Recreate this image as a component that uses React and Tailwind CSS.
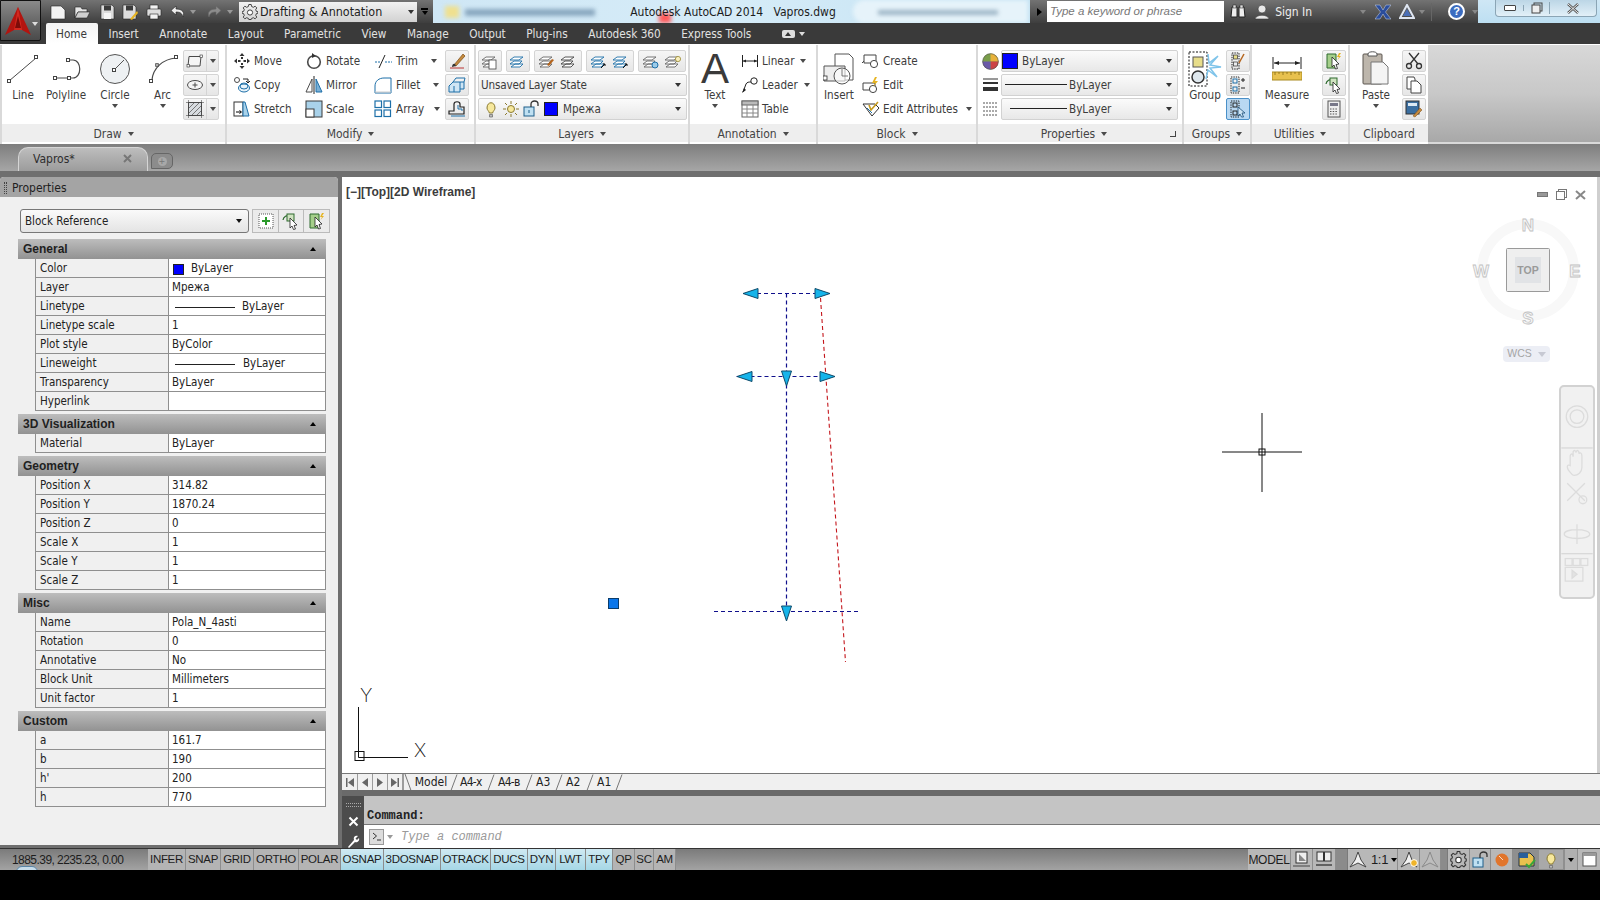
import React from "react";

const I = ({ w = 18, h = 18, children, className = "" }) => (
  <svg width={w} height={h} viewBox={`0 0 ${w} ${h}`} fill="none" className={"shrink-0 " + className}>{children}</svg>
);
const D = "#4a4a4a";
const T = ({ children, className = "" }) => <span className={"pt-[2px] " + className}>{children}</span>;
const Caret = ({ className = "border-t-[#4a4a4a]" }) => (
  <span className={"inline-block w-0 h-0 shrink-0 border-x-[3px] border-t-[4px] border-x-transparent " + className} />
);
const Sq = ({ x, y, s = 4 }) => <rect x={x - s / 2} y={y - s / 2} width={s} height={s} fill="#fff" stroke="#444" />;

/* ---------- ribbon icons ---------- */
const LineI = () => <I w={34} h={32}><path d="M3 28L30 5" stroke={D} /><Sq x={3} y={28} s={3} /><Sq x={30} y={4} s={3} /></I>;
const PolyI = () => <I w={34} h={32}><path d="M6 25H24C33 25 33 7 24 7H19" stroke={D} strokeWidth="1.2" /><Sq x={6} y={25} s={3} /><Sq x={20} y={25} s={3} /><Sq x={19} y={7} s={3} /></I>;
const CircleI = () => <I w={34} h={32}><circle cx={17} cy={16} r={14.5} fill="#eef1f3" stroke="#555" /><path d="M17 16L26 7" stroke="#555" /><Sq x={16} y={17} s={3} /></I>;
const ArcI = () => <I w={34} h={32}><path d="M6 27C7 15 17 6 30 5" stroke={D} strokeWidth="1.2" /><Sq x={5} y={28} s={3} /><Sq x={11} y={12} s={2.5} /><Sq x={30} y={4} s={3} /></I>;
const RectI = () => <I w={18} h={14}><path d="M3 2.5H15L14 12H2Z" stroke={D} fill="#f5f5f5" /><rect x={1} y={10.5} width={2.5} height={2.5} fill="#fff" stroke={D} strokeWidth=".7" /><rect x={14} y={1} width={2.5} height={2.5} fill="#fff" stroke={D} strokeWidth=".7" /></I>;
const EllI = () => <I w={18} h={14}><ellipse cx={9} cy={7} rx={7.5} ry={4.5} stroke={D} fill="#f5f5f5" /><path d="M9 4.5V9.5M6.5 7H11.5" stroke={D} /></I>;
const HatchI = () => <I w={18} h={18}><rect x={2.5} y={2.5} width={13} height={13} fill="#d8dce0" stroke={D} /><path d="M3 8L8 3M3 13L13 3M6 15L15 6M11 15L15 11" stroke="#777" /><path d="M0 2.5H18M0 15.5H18M2.5 0V18M15.5 0V18" stroke={D} strokeWidth=".6" /></I>;
const MoveI = () => <I><path d="M9 1L11.5 4H6.5ZM9 17L6.5 14H11.5ZM1 9L4 6.5V11.5ZM17 9L14 11.5V6.5Z" fill="#333" /><rect x={5} y={8} width={2.5} height={2} fill="#333" /><rect x={10.5} y={8} width={2.5} height={2} fill="#333" /><rect x={8} y={5} width={2} height={2} fill="#333" /><rect x={8} y={11} width={2} height={2} fill="#333" /></I>;
const CopyI = () => <I><circle cx={4} cy={4} r={2.5} stroke={D} fill="#fff" /><ellipse cx={11} cy={12} rx={5.5} ry={4} stroke="#1d6fa8" fill="#e8f3fa" /><ellipse cx={11} cy={10} rx={4} ry={3} stroke="#1d6fa8" /><path d="M10 3H15V6M13 5L15 7L17 5" stroke="#222" /></I>;
const StretchI = () => <I><rect x={1} y={2} width={9} height={14} fill="#fff" stroke="#333" /><path d="M10 2L12 2L16 16H10Z" fill="#a9d2ea" stroke="#1d6fa8" /><path d="M3 12H8M6.5 10.5L8.5 12L6.5 13.5" stroke="#000" /></I>;
const RotateI = () => <I><circle cx={9} cy={10} r={6.3} stroke={D} strokeWidth="1.6" /><path d="M7 1L11 4L7 6Z" fill="#333" /></I>;
const MirrorI = () => <I><path d="M7 3L1 16H7Z" stroke={D} fill="#fff" /><path d="M11 3L17 16H11Z" fill="#7ab0d6" stroke="#1d6fa8" /><path d="M9 0V18" stroke="#222" /></I>;
const ScaleI = () => <I><rect x={1} y={1} width={16} height={16} fill="#a9d2ea" stroke="#3b3b3b" /><rect x={1} y={9} width={8} height={8} fill="#fff" stroke="#3b3b3b" /></I>;
const TrimI = () => <I><path d="M1 10H6M11 10H18" stroke="#1d6fa8" strokeDasharray="2 1" /><path d="M5 16L11 3" stroke="#222" /></I>;
const FilletI = () => <I><path d="M1 16V10C1 5 5 2 10 2H17V17H1Z" fill="#fff" stroke="#1d6fa8" strokeWidth="1" /><path d="M1 16H17" stroke="#ccc" /></I>;
const ArrayI = () => <I>{[1, 10].map((x) => [1, 10].map((y) => <rect key={x + "" + y} x={x} y={y} width={6.5} height={6.5} fill="#fff" stroke="#1d6fa8" strokeWidth="1.2" />))}</I>;
const BrushI = () => <I w={18} h={18}><path d="M2 16H16" stroke="#b33" /><path d="M6 13L15 2L17 4L8 14Z" fill="#c48a3f" stroke="#7a4a12" strokeWidth=".7" /><path d="M4 15C4 12 6 11 7 12L8 14Z" fill="#333" /></I>;
const BoxI = () => <I><path d="M1 10L5 6H16V13H12V16H1Z" fill="#cfe5f4" stroke="#1d6fa8" /><path d="M5 6L8 2H17L16 6M12 13V6M6 10V16" stroke="#1d6fa8" /></I>;
const OffsetI = () => <I><path d="M1 14V11H6V4C6 1 12 1 12 4V7H16V14Z" stroke="#222" strokeWidth="1.2" /><path d="M3 16H17M14 11V9H10V5" stroke="#1d6fa8" /></I>;
const LayerI = ({ c = "#666", a }) => (
  <I><path d="M1 12L5 9H13L10 12H1ZM2 15L6 12H14L11 15H2Z" fill="#fff" stroke={c} strokeWidth=".9" /><path d="M1 8L5 5H14L10 8H1Z" fill="#fff" stroke={c} strokeWidth=".9" />{a === "brush" && <path d="M9 13L14 7L16 8L11 14Z" fill="#b5651d" />}{a === "doc" && <rect x={8} y={8} width={7} height={9} fill="#fff" stroke="#444" strokeWidth=".8" />}{a === "arrow" && <path d="M11 16L15 12M13 12H15V14" stroke="#111" />}{a === "gear" && <circle cx={13} cy={13} r={3} fill="#9ccbe8" stroke="#1d6fa8" />}{a === "bulb" && <circle cx={14} cy={7} r={2.6} fill="#f8efc0" stroke="#9a8a30" strokeWidth=".8" />}</I>
);
const BulbI = () => <I w={14} h={18}><path d="M3 8C3 1 11 1 11 8C11 10 9 11 8.6 13H5.4C5 11 3 10 3 8Z" fill="#f7e89c" stroke="#8a7a30" /><path d="M5.5 14.5H8.5V17H5.5Z" fill="#bbb" stroke="#666" strokeWidth=".7" /></I>;
const SunI = () => <I w={16} h={16}><circle cx={8} cy={8} r={3.5} fill="#f7e89c" stroke="#8a7a30" /><path d="M8 0V3M8 13V16M0 8H3M13 8H16M2 2L4 4M12 12L14 14M14 2L12 4M4 12L2 14" stroke="#8a7a30" /></I>;
const LockI = () => <I w={17} h={17}><rect x={1} y={7} width={10} height={9} fill="#bfe0f2" stroke="#1f5f8a" /><path d="M8 7V4C8 0 15 0 15 4V6" stroke="#333" strokeWidth="1.3" /><path d="M6 10V13" stroke="#1f5f8a" /></I>;
const Swatch = ({ s = 14 }) => <span className="inline-block bg-[#0000ff] border border-[#222] shrink-0" style={{ width: s, height: s }} />;
const LinearI = () => <I><path d="M1.5 3V15M16.5 3V15M2 9H16" stroke="#222" /><path d="M2 9L5 7.5V10.5ZM16 9L13 7.5V10.5Z" fill="#222" /></I>;
const LeaderI = () => <I><path d="M2 16L5 8C6 6 8 6 10 6" stroke="#222" /><path d="M1 17L3 12L5 14Z" fill="#222" /><circle cx={13} cy={5} r={3.2} stroke="#222" /></I>;
const TableI = () => <I><rect x={1} y={1} width={16} height={16} fill="#fff" stroke="#666" /><rect x={1} y={1} width={16} height={4} fill="#bbb" stroke="#666" /><path d="M1 9H17M1 13H17M6 5V17M12 5V17" stroke="#888" /></I>;
const InsertI = () => <I w={32} h={34}><path d="M12 2H26L30 6V28H12Z" fill="#fff" stroke="#555" /><path d="M1 14H22V29H1Z" fill="#eee" stroke="#555" /><circle cx={19} cy={24} r={8} fill="#fff" fillOpacity=".6" stroke="#555" /><path d="M19 17V24H25" stroke="#555" strokeWidth=".8" /><rect x={0} y={24} width={4} height={4} fill="#fff" stroke="#333" strokeWidth=".8" /></I>;
const CreateI = () => <I><path d="M2 3H14V11H2Z" stroke="#444" fill="#fff" /><circle cx={12} cy={12} r={3.6} fill="#fff" stroke="#444" /><path d="M2 9L0 11" stroke="#444" /></I>;
const EditI = () => <I><path d="M1 7H13V14H1Z" stroke="#444" fill="#fff" /><circle cx={11} cy={13} r={3.6} fill="#fff" stroke="#444" /><path d="M13 1L10 7H13L11 11L16 5H13L15 1Z" fill="#e6b422" /></I>;
const AttrI = () => <I w={20} h={18}><path d="M1 4H13L17 8L10 16Z" fill="#fff" stroke="#333" /><path d="M7 5L9 10L16 2" stroke="#c59a1d" strokeWidth="1.6" /><path d="M5 8L10 13" stroke="#1d6fa8" /></I>;
const WheelI = () => (
  <I w={17} h={17}><circle cx={8.5} cy={8.5} r={8} fill="#7a9e4a" /><path d="M8.5 8.5L8.5 .5A8 8 0 0 1 16.5 8.5Z" fill="#e8b23a" /><path d="M8.5 8.5L16.5 8.5A8 8 0 0 1 8.5 16.5Z" fill="#cc4444" /><path d="M8.5 8.5L8.5 16.5A8 8 0 0 1 .5 8.5Z" fill="#6a5aa8" /><circle cx={8.5} cy={8.5} r={7.8} stroke="#555" strokeWidth=".6" /></I>
);
const WeightI = () => <I w={17} h={16}><path d="M1 2H16" stroke="#333" strokeWidth="1" /><path d="M1 6H16" stroke="#333" strokeWidth="2" /><path d="M1 12H16" stroke="#333" strokeWidth="4" /></I>;
const LtypeI = () => <I w={17} h={16}><path d="M1 2H16M1 6H16M1 10H16M1 14H16" stroke="#555" strokeDasharray="2 1" /></I>;
const GroupI = () => (
  <I w={34} h={36}><rect x={1} y={1} width={18} height={34} stroke="#111" strokeDasharray="2 1.5" /><rect x={5} y={6} width={10} height={10} fill="#e7dd8a" stroke="#555" /><circle cx={10} cy={26} r={6} fill="#dfe8ee" stroke="#333" strokeWidth="1.5" /><path d="M20 3L21 12L30 5L22 14L33 16L22 17L29 26L20 19L18 28" stroke="#7fc4ea" strokeWidth="1.5" /></I>
);
const G1 = () => <I w={14} h={18}><rect x={1} y={1} width={7} height={16} stroke="#222" strokeDasharray="1.4 1" /><rect x={2.5} y={3} width={4} height={4} fill="#e7dd8a" stroke="#333" strokeWidth=".7" /><rect x={2.5} y={10} width={4} height={4} stroke="#333" strokeWidth=".7" /><path d="M8 11L13 2" stroke="#b5651d" strokeWidth="1.5" /></I>;
const G2 = () => <I w={16} h={18}><rect x={1} y={1} width={8} height={16} stroke="#222" strokeDasharray="1.4 1" /><rect x={3} y={3} width={4} height={4} stroke="#1d6fa8" /><rect x={3} y={11} width={4} height={4} stroke="#1d6fa8" /><path d="M11 4H15M13 2V6M11 12H15" stroke="#222" /></I>;
const G3 = () => <I w={16} h={18}><rect x={1} y={1} width={8} height={16} stroke="#222" strokeDasharray="1.4 1" /><rect x={3} y={3} width={4} height={4} stroke="#222" /><rect x={3} y={11} width={4} height={4} stroke="#222" /><path d="M8 7L15 13L12 13L13.5 17L11.5 17L10 14L8 16Z" fill="#cfe5f4" stroke="#1d4f78" strokeWidth=".8" /></I>;
const MeasureI = () => <I w={30} h={26}><path d="M1 1V13M29 1V13M2 7H28" stroke="#222" /><path d="M2 7L7 5V9ZM28 7L23 5V9Z" fill="#222" /><rect x={0} y={16} width={30} height={8} fill="#e8c14e" stroke="#a98a20" /><path d="M3 16V19M7 16V18M11 16V19M15 16V18M19 16V19M23 16V18M27 16V19" stroke="#7a6310" strokeWidth=".7" /></I>;
const QuickI = () => <I><path d="M2 2H11V16H2Z" fill="#a5cf8a" stroke="#2e6b2e" /><path d="M7 5L14 12L11 12.5L12.5 16.5L10.5 17L9 13L7 15Z" fill="#fff" stroke="#222" strokeWidth=".8" /><path d="M14 1L12 5H14L12.5 8L16 4H14L16 1Z" fill="#e6b422" /></I>;
const SelSimI = () => <I><path d="M1 8A5 5 0 0 1 8 4" stroke="#2e6b2e" strokeWidth="1.2" /><rect x={5} y={2} width={7} height={7} fill="#cfe3c0" stroke="#2e6b2e" /><path d="M8 6L15 13L12 13.5L13.5 17L11.5 17.5L10 14L8 16Z" fill="#fff" stroke="#222" strokeWidth=".8" /></I>;
const CalcI = () => <I w={14} h={18}><rect x={1} y={1} width={12} height={16} fill="#eee" stroke="#555" /><rect x={3} y={3} width={8} height={3} fill="#778" /><path d="M3 9H11M3 11.5H11M3 14H11" stroke="#555" strokeDasharray="1.5 1.2" /></I>;
const PasteI = () => <I w={28} h={36}><rect x={1} y={3} width={19} height={30} rx={1} fill="#bdb6ac" stroke="#5c5650" /><path d="M6 3C6 0 15 0 15 3V5H6Z" fill="#fff" stroke="#555" /><path d="M9 11H21L26 16V33H9Z" fill="#f4f4f4" stroke="#777" /></I>;
const CutI = () => <I><path d="M4 1L13 12M14 1L5 12" stroke="#333" strokeWidth="1.3" /><circle cx={4} cy={14} r={2.5} stroke="#333" strokeWidth="1.3" /><circle cx={14} cy={14} r={2.5} stroke="#333" strokeWidth="1.3" /></I>;
const CopyClipI = () => <I><path d="M2 1H9L10 3V13H2Z" fill="#fff" stroke="#444" /><path d="M6 5H12L16 9V17H6Z" fill="#fff" stroke="#444" /></I>;
const MatchI = () => <I><rect x={1} y={1} width={13} height={13} fill="#3a6ea0" stroke="#333" /><rect x={3} y={3} width={9} height={3} fill="#dce9f3" /><path d="M8 16L15 8L17 10L10 17Z" fill="#c48a3f" stroke="#7a4a12" strokeWidth=".5" /></I>;

/* ---------- ribbon pieces ---------- */
const Row = ({ icon, label, caret, slot = "w-[21px]", capX = "" }) => (
  <div className="h-[24px] flex items-center whitespace-nowrap">
    <span className={"flex items-center " + slot}>{icon}</span>
    <T>{label}</T>
    {caret && <span className={"flex items-center " + capX}><Caret /></span>}
  </div>
);
const Tool = ({ children, active, className = "" }) => (
  <div className={"h-[22px] flex items-center justify-center border rounded-[2px] " + (active ? "bg-[#b9d8f2] border-[#4a90c8] " : "bg-gradient-to-b from-[#f6f6f6] to-[#e6e6e6] border-[#d4d4d4] ") + className}>{children}</div>
);
const ToolCol = ({ items, className = "" }) => (
  <div className={"w-[24px] flex flex-col gap-[2px] pt-[5px] " + className}>
    {items.map((it, i) => <Tool key={i} active={it.active}>{it.icon}</Tool>)}
  </div>
);
const Big = ({ icon, label, caret, className = "", top = "h-[37px]" }) => (
  <div className={"flex flex-col items-center pt-[5px] " + className}>
    <div className={"flex items-center justify-center " + top}>{icon}</div>
    <span className="leading-[16px]">{label}</span>
    {caret && <span className="flex mt-[1px]"><Caret /></span>}
  </div>
);
const Combo = ({ children, className = "" }) => (
  <div className={"h-[22px] flex items-center pr-[5px] border border-[#d2d2d2] rounded-[2px] bg-gradient-to-b from-[#fbfbfb] to-[#e8e8e8] " + className}>
    <div className="flex-1 flex items-center min-w-0">{children}</div>
    <Caret className="border-t-[#333]" />
  </div>
);
const Panel = ({ w, title, caret = true, corner, children }) => (
  <div className={"flex flex-col " + w}>
    <div className="h-[79px] flex bg-white text-[11.6px]">{children}</div>
    <div className={"relative h-[18px] pt-[1px] bg-[#eeeeee] flex items-center justify-center gap-[6px] text-[#444] " + (corner ? "pr-[12px]" : "")}>
      <span>{title}</span>
      {caret && <Caret />}
      {corner && <span className="absolute right-[6px] top-[7px] w-[6px] h-[6px] border-r border-b border-[#444]" />}
    </div>
    <div className="h-[2px] bg-white" />
  </div>
);
const Ribbon = () => (
  <div className="h-[100px] flex gap-[2px] pl-[2px] bg-[#d9d9d9] text-[12px] text-[#3c3c3c] border-t border-white">
    <Panel w="w-[223px]" title="Draw">
      <Big className="w-[42px]" icon={<LineI />} label="Line" />
      <Big className="w-[44px]" icon={<PolyI />} label="Polyline" />
      <Big className="w-[54px]" icon={<CircleI />} label="Circle" caret />
      <Big className="w-[41px]" icon={<ArcI />} label="Arc" caret />
      <div className="w-[36px] flex flex-col gap-[2px] pt-[5px]">
        {[<RectI />, <EllI />, <HatchI />].map((ic, i) => (
          <div key={i} className="h-[22px] flex border border-[#d4d4d4] rounded-[2px] bg-gradient-to-b from-[#f6f6f6] to-[#e6e6e6]">
            <span className="w-[23px] flex items-center justify-center border-r border-[#d4d4d4]">{ic}</span>
            <span className="flex-1 flex items-center justify-center"><Caret /></span>
          </div>
        ))}
      </div>
    </Panel>
    <Panel w="w-[247px]" title="Modify">
      <div className="w-[78px] pl-[6px] pt-[4px]">
        <Row icon={<MoveI />} label="Move" /><Row icon={<CopyI />} label="Copy" /><Row icon={<StretchI />} label="Stretch" />
      </div>
      <div className="w-[69px] pt-[4px]">
        <Row icon={<RotateI />} label="Rotate" /><Row icon={<MirrorI />} label="Mirror" /><Row icon={<ScaleI />} label="Scale" />
      </div>
      <div className="w-[71px] pt-[4px]">
        <Row slot="w-[22px]" icon={<TrimI />} label="Trim" caret capX="ml-[13px]" />
        <Row slot="w-[22px]" icon={<FilletI />} label="Fillet" caret capX="ml-[13px]" />
        <Row slot="w-[22px]" icon={<ArrayI />} label="Array" caret capX="ml-[10px]" />
      </div>
      <ToolCol items={[{ icon: <BrushI /> }, { icon: <BoxI /> }, { icon: <OffsetI /> }]} />
    </Panel>
    <Panel w="w-[212px]" title="Layers">
      <div className="pl-[2px] pt-[5px] flex flex-col gap-[2px]">
        <div className="flex gap-[4px] h-[22px]">
          <Tool className="w-[24px]"><LayerI a="doc" /></Tool>
          <Tool className="w-[24px]"><LayerI c="#1d6fa8" /></Tool>
          <Tool className="w-[48px] gap-[4px]"><LayerI a="brush" /><LayerI c="#444" /></Tool>
          <Tool className="w-[48px] gap-[4px]"><LayerI c="#1d6fa8" a="arrow" /><LayerI c="#1d6fa8" a="arrow" /></Tool>
          <Tool className="w-[48px] gap-[4px]"><LayerI a="gear" /><LayerI a="bulb" /></Tool>
        </div>
        <Combo className="w-[209px] pl-[2px] tracking-[-0.15px]"><T>Unsaved Layer State</T></Combo>
        <Combo className="w-[209px] pl-[5px]">
          <BulbI /><span className="w-[5px]" /><SunI /><span className="w-[4px]" /><LockI /><span className="w-[4px]" /><Swatch /><T className="ml-[5px]">Мрежа</T>
        </Combo>
      </div>
    </Panel>
    <Panel w="w-[126px]" title="Annotation">
      <Big className="w-[50px]" top="h-[37px]" icon={<span className="text-[42px] leading-[34px] text-[#3a3a3a] font-['Liberation_Sans']">A</span>} label="Text" caret />
      <div className="pt-[4px] pl-[1px]">
        <Row icon={<LinearI />} label="Linear" caret capX="ml-[6px]" />
        <Row icon={<LeaderI />} label="Leader" caret capX="ml-[6px]" />
        <Row icon={<TableI />} label="Table" />
      </div>
    </Panel>
    <Panel w="w-[158px]" title="Block">
      <Big className="w-[42px]" icon={<InsertI />} label="Insert" />
      <div className="pt-[4px] pl-[2px]">
        <Row icon={<CreateI />} label="Create" />
        <Row icon={<EditI />} label="Edit" />
        <Row icon={<AttrI />} label="Edit Attributes" caret capX="ml-[8px]" />
      </div>
    </Panel>
    <Panel w="w-[204px]" title="Properties" corner>
      <div className="flex flex-col pt-[5px] gap-[2px] pl-[4px]">
        <div className="flex items-center h-[22px]"><span className="w-[19px]"><WheelI /></span>
          <Combo className="w-[177px]"><Swatch s={16} /><T className="ml-[4px]">ByLayer</T></Combo></div>
        <div className="flex items-center h-[22px]"><span className="w-[19px]"><WeightI /></span>
          <Combo className="w-[177px] pl-[3px]"><span className="w-[62px] h-px bg-[#222] mr-[2px]" /><T>ByLayer</T></Combo></div>
        <div className="flex items-center h-[22px]"><span className="w-[19px]"><LtypeI /></span>
          <Combo className="w-[177px] pl-[8px]"><span className="w-[57px] h-px bg-[#222] mr-[2px]" /><T>ByLayer</T></Combo></div>
      </div>
    </Panel>
    <Panel w="w-[66px]" title="Groups">
      <Big className="w-[42px]" icon={<GroupI />} label="Group" />
      <ToolCol items={[{ icon: <G1 /> }, { icon: <G2 /> }, { icon: <G3 />, active: true }]} />
    </Panel>
    <Panel w="w-[96px]" title="Utilities">
      <Big className="w-[70px]" icon={<MeasureI />} label="Measure" caret />
      <ToolCol items={[{ icon: <QuickI /> }, { icon: <SelSimI /> }, { icon: <CalcI /> }]} />
    </Panel>
    <Panel w="w-[78px]" title="Clipboard" caret={false}>
      <Big className="w-[52px]" icon={<PasteI />} label="Paste" caret />
      <ToolCol items={[{ icon: <CutI /> }, { icon: <CopyClipI /> }, { icon: <MatchI /> }]} />
    </Panel>
    <div className="flex-1 ml-[-2px] mb-[2px] bg-gradient-to-b from-[#d8d8d8] via-[#c8c8c8] to-[#a8a8a8]" />
  </div>
);

/* ---------- title bar ---------- */
const AppLogo = () => (
  <div className="absolute left-0 top-0 w-[41px] h-[41px] border border-[#111] rounded-br-[2px] bg-gradient-to-b from-[#8a8a8a] to-[#4a4a4a] flex items-center pl-[4px]">
    <svg width="26" height="30" viewBox="0 0 26 30">
      <path d="M13 1L26 29L17 24H9L0 29Z" fill="#b3140f" />
      <path d="M13 1L17 24H9Z" fill="#d4281f" />
      <path d="M10 22L13 10L16 22Z" fill="#7d0c09" />
    </svg>
    <span className="ml-[1px]"><Caret className="border-t-[#ddd]" /></span>
  </div>
);
const DocI = () => <I w={16} h={16}><path d="M1 2H11L15 6V15H1Z" fill="#f2f2f2" stroke="#222" strokeWidth=".6" /></I>;
const OpenI = () => <I w={16} h={16}><path d="M1 3H7L8 5H13V8H4L1 14Z" fill="#e6e6e6" stroke="#222" strokeWidth=".6" /><path d="M4 8H16L13 14H1Z" fill="#cfcfcf" stroke="#222" strokeWidth=".6" /></I>;
const SaveI = () => <I w={16} h={16}><path d="M2 1H13L15 3V15H2Z" fill="#dcdcdc" stroke="#222" strokeWidth=".6" /><rect x={5} y={1.5} width={7} height={5} fill="#3b3b3b" /><rect x={5} y={9} width={7} height={6} fill="#f5f5f5" /></I>;
const SaveAsI = () => <I w={16} h={16}><path d="M1 1H12L14 3V15H1Z" fill="#dcdcdc" stroke="#222" strokeWidth=".6" /><rect x={4} y={1.5} width={7} height={5} fill="#3b3b3b" /><path d="M8 15L15 7L16 9L10 16Z" fill="#e6b422" /></I>;
const PrintI = () => <I w={16} h={16}><rect x={4} y={1} width={8} height={5} fill="#f2f2f2" stroke="#222" strokeWidth=".6" /><rect x={1} y={5} width={14} height={7} rx={1} fill="#dedede" stroke="#222" strokeWidth=".6" /><rect x={4} y={10} width={8} height={5} fill="#f2f2f2" stroke="#222" strokeWidth=".6" /></I>;
const UndoI = ({ flip, dim }) => (
  <I w={16} h={14} className={flip ? "-scale-x-100" : ""}>
    <path d="M6 1L1 5.5L6 10V7C10 7 12 8 13 12C15 7 12 4 6 4Z" fill={dim ? "#8c8c8c" : "#eeeeee"} stroke={dim ? "#666" : "#222"} strokeWidth=".6" />
  </I>
);
const GearI = ({ s = 16, c = "#444", f = "none" }) => (
  <svg width={s} height={s} viewBox="0 0 16 16" fill={f} className="shrink-0">
    <path d="M6.8 1H9.2L9.6 3L11.4 3.8L13.1 2.7L14.8 4.4L13.7 6.1L14.4 7.9L16 8.3V9.7L14.4 10.1L13.7 11.9L14.8 13.6L13.1 15.3L11.4 14.2L9.6 14.9L9.2 16H6.8L6.4 14.9L4.6 14.2L2.9 15.3L1.2 13.6L2.3 11.9L1.6 10.1L0 9.7V8.3L1.6 7.9L2.3 6.1L1.2 4.4L2.9 2.7L4.6 3.8L6.4 3Z" stroke={c} strokeWidth="1" transform="translate(0 -.5)" />
    <circle cx="8" cy="8.5" r="2.6" stroke={c} strokeWidth="1" fill="#fff" />
  </svg>
);
const TitleBar = () => (
  <div className="relative h-[23px] flex text-[12px]">
    <div className="w-[433px] shrink-0 flex items-center pl-[50px] bg-gradient-to-b from-[#737373] to-[#3e3e3e]">
      <span className="w-[24px]"><DocI /></span>
      <span className="w-[25px]"><OpenI /></span>
      <span className="w-[23px]"><SaveI /></span>
      <span className="w-[24px]"><SaveAsI /></span>
      <span className="w-[24px]"><PrintI /></span>
      <span className="w-[20px]"><UndoI /></span>
      <span className="w-[16px] flex"><Caret className="border-t-[#999]" /></span>
      <span className="w-[21px]"><UndoI flip dim /></span>
      <span className="w-[12px] flex"><Caret className="border-t-[#999]" /></span>
      <div className="w-[178px] h-[20px] flex items-center pl-[3px] pr-[3px] bg-gradient-to-b from-[#f2f2f2] to-[#d2d2d2] text-[#222] text-[12.4px]">
        <GearI />
        <T className="ml-[2px] flex-1 whitespace-nowrap">Drafting &amp; Annotation</T>
        <Caret className="border-t-[#333]" />
      </div>
      <div className="ml-[4px] flex flex-col items-center gap-[1px]">
        <span className="w-[7px] h-[2px] bg-black" />
        <Caret className="border-t-black" />
      </div>
    </div>
    <div className="relative w-[597px] shrink-0 flex items-center justify-center bg-gradient-to-r from-[#cfe7f5] via-[#d6ecf8] to-[#c3e2f3] overflow-hidden text-[#1c1c1c] text-[12px]">
      <span className="absolute left-[12px] top-[6px] w-[14px] h-[12px] bg-[#efe08f] blur-[2px]" />
      <span className="absolute left-[32px] top-[9px] w-[130px] h-[7px] bg-[#6b8ca8] opacity-70 blur-[2px]" />
      <span className="absolute left-[226px] top-[13px] w-[12px] h-[10px] bg-[#ff5a5a] blur-[2px]" />
      <span className="absolute left-[420px] top-[0px] w-[175px] h-[23px] rounded-l-[12px] bg-[#e6f3fa] blur-[2px]" />
      <span className="absolute left-[445px] top-[10px] w-[120px] h-[5px] bg-[#7e9bb0] opacity-70 blur-[2px]" />
      <span className="relative ml-[3px] whitespace-pre">Autodesk AutoCAD 2014   Vapros.dwg</span>
    </div>
    <div className="relative w-[448px] shrink-0 flex items-center bg-gradient-to-b from-[#737373] to-[#3e3e3e] text-white whitespace-nowrap">
      <span className="ml-[7px] w-0 h-0 border-y-[4px] border-l-[5px] border-y-transparent border-l-black" />
      <div className="ml-[5px] w-[179px] h-[21px] flex items-center pl-[3px] bg-white italic text-[#777] text-[11.5px] font-['Liberation_Sans']">Type a keyword or phrase</div>
      <I w={16} h={16} className="ml-[6px]"><path d="M2 3H7V13H1Z M9 3H14L15 13H9Z" fill="#eee" stroke="#222" /><rect x={3} y={1} width={3} height={3} fill="#ddd" stroke="#222" strokeWidth=".5" /><rect x={10} y={1} width={3} height={3} fill="#ddd" stroke="#222" strokeWidth=".5" /></I>
      <I w={16} h={16} className="ml-[8px]"><circle cx={8} cy={5} r={4} fill="#e8e8e8" stroke="#333" strokeWidth=".6" /><path d="M1 15C2 10 14 10 15 15Z" fill="#e8e8e8" stroke="#333" strokeWidth=".6" /></I>
      <span className="ml-[5px] w-[36px] text-[#eee]">Sign In</span>
      <span className="ml-[49px] flex"><Caret className="border-t-[#888]" /></span>
      <I w={16} h={16} className="ml-[9px]"><path d="M0 1H5L8 6L11 1H16L10.5 8L16 15H11L8 10L5 15H0L5.5 8Z" fill="#2a4d9c" stroke="#cfd9ee" strokeWidth=".5" /></I>
      <I w={16} h={16} className="ml-[8px]"><path d="M8 1L15 14H1Z" stroke="#dfe6f2" strokeWidth="2" /><path d="M8 5L12 12H4Z" fill="#4a6fb8" /></I>
      <span className="ml-[4px] flex"><Caret className="border-t-[#888]" /></span>
      <span className="ml-[6px] w-px h-[18px] bg-[#666]" />
      <span className="relative ml-[16px] w-[17px] h-[17px] rounded-full bg-[#3b6cc0] border-2 border-white text-[11px] leading-[13px] text-center font-bold text-white font-['Liberation_Sans']">?</span>
      <span className="ml-[7px] flex"><Caret className="border-t-[#888]" /></span>
    </div>
    <div className="flex-1 bg-gradient-to-b from-[#cfe7f5] to-[#bddff2] flex justify-end pr-[3px]">
      <div className="w-[102px] h-[17px] flex items-center border border-t-0 border-[#8ba5b5] rounded-b-[4px] bg-gradient-to-b from-[#bcd6e6] to-[#e2f0f8]">
        <span className="w-[28px] flex justify-center border-r border-[#8ba5b5]"><span className="w-[12px] h-[6px] border border-[#444] rounded-[1px] bg-white" /></span>
        <span className="w-[26px] flex justify-center border-r border-[#8ba5b5]"><I w={12} h={12}><rect x={3} y={1} width={8} height={8} stroke="#444" /><rect x={1} y={3} width={8} height={8} fill="#eee" stroke="#444" /></I></span>
        <span className="flex-1 flex justify-center"><I w={12} h={11}><path d="M1 1L11 10M11 1L1 10" stroke="#555" strokeWidth="2.4" /><path d="M1 1L11 10M11 1L1 10" stroke="#eee" strokeWidth="1" /></I></span>
      </div>
    </div>
  </div>
);

const Tabs = () => (
  <div className="h-[21px] flex bg-[#3a3a3a] text-[11.7px] text-[#e2e2e2] pl-[46px]">
    {["Home", "Insert", "Annotate", "Layout", "Parametric", "View", "Manage", "Output", "Plug-ins", "Autodesk 360", "Express Tools"].map((t, i) => (
      <div key={t} className={"h-[21px] pl-[10px] pr-[10.5px] pt-[2px] flex items-center " + (i === 0 ? "bg-gradient-to-b from-[#f4f4f4] to-[#ffffff] text-[#3a3a3a] rounded-t-[2px] mr-[1px] " : "")}>{t}</div>
    ))}
    <div className="ml-[20px] flex items-center gap-[4px]">
      <span className="w-[13px] h-[8px] rounded-[2px] bg-[#dedede] flex items-center justify-center"><Caret className="border-t-[#333] rotate-180" /></span>
      <Caret className="border-t-[#ddd]" />
    </div>
  </div>
);

const DocBar = () => (
  <div className="h-[27px] flex items-end pl-[18px] bg-gradient-to-b from-[#7e7e7e] to-[#a6a6a6]">
    <div className="w-[130px] h-[24px] pb-[2px] pl-[14px] pr-[15px] flex items-center justify-between rounded-t-[10px] bg-gradient-to-b from-[#bdbdbd] to-[#9c9c9c] border-t border-x border-[#d5d5d5] text-[12px] text-[#2e2e2e]">
      <span>Vapros*</span>
      <I w={9} h={9}><path d="M1 1L8 8M8 1L1 8" stroke="#777" strokeWidth="2" /></I>
    </div>
    <div className="ml-[3px] w-[22px] h-[16px] mb-[2px] rounded-t-[5px] rounded-br-[5px] bg-[#8c8c8c] border border-[#666] flex items-center justify-center">
      <span className="w-[9px] h-[9px] rounded-full bg-[#a8a8a8] text-[9px] leading-[9px] text-center text-[#777]">+</span>
    </div>
  </div>
);

/* ---------- properties palette ---------- */
const Ln = ({ w }) => <span className={"h-px bg-[#222] " + w} />;
const sections = [
  { t: "General", rows: [
    ["Color", <span className="flex items-center gap-[7px] pl-[1px]"><Swatch s={11} />ByLayer</span>],
    ["Layer", "Мрежа"],
    ["Linetype", <span className="flex items-center gap-[7px] pl-[3px]"><Ln w="w-[60px]" />ByLayer</span>],
    ["Linetype scale", "1"],
    ["Plot style", "ByColor"],
    ["Lineweight", <span className="flex items-center gap-[8px] pl-[3px]"><Ln w="w-[60px]" />ByLayer</span>],
    ["Transparency", "ByLayer"],
    ["Hyperlink", ""],
  ] },
  { t: "3D Visualization", rows: [["Material", "ByLayer"]] },
  { t: "Geometry", rows: [["Position X", "314.82"], ["Position Y", "1870.24"], ["Position Z", "0"], ["Scale X", "1"], ["Scale Y", "1"], ["Scale Z", "1"]] },
  { t: "Misc", rows: [["Name", "Pola_N_4asti"], ["Rotation", "0"], ["Annotative", "No"], ["Block Unit", "Millimeters"], ["Unit factor", "1"]] },
  { t: "Custom", rows: [["a", "161.7"], ["b", "190"], ["h'", "200"], ["h", "770"]] },
];
const Palette = () => (
  <div className="w-[338px] h-[668px] rounded-t-[4px] bg-[#f0f0f0] flex flex-col text-[11.5px] text-[#222] overflow-hidden">
    <div className="h-[20px] pl-[4px] pt-[1px] flex items-center gap-[5px] bg-[#a4a4a4] text-[#1f1f1f] text-[12px]">
      <span className="w-[3px] h-[12px] border-x border-dotted border-[#444]" />
      <span>Properties</span>
    </div>
    <div className="flex pl-[20px] pt-[12px]">
      <div className="w-[229px] h-[24px] flex items-center pl-[4px] pr-[6px] border border-[#777] rounded-[3px] bg-gradient-to-b from-[#fafafa] to-[#e4e4e4]">
        <T className="flex-1">Block Reference</T>
        <Caret className="border-t-[#111]" />
      </div>
      <div className="ml-[3px] flex h-[24px] border border-[#bbb] bg-[#ebebeb]">
        <span className="w-[26px] flex items-center justify-center border-r border-[#bbb]"><I w={16} h={16}><rect x={1} y={1} width={14} height={14} stroke="#555" strokeDasharray="1 1" fill="#fff" /><path d="M8 4V12M4 8H12" stroke="#2b9a2b" strokeWidth="2" /></I></span>
        <span className="w-[25px] flex items-center justify-center border-r border-[#bbb]"><SelSimI /></span>
        <span className="w-[25px] flex items-center justify-center"><QuickI /></span>
      </div>
    </div>
    <div className="pl-[18px] pt-[6px] flex flex-col gap-[3px]">
      {sections.map((s) => (
        <div key={s.t} className="w-[308px]">
          <div className="h-[20px] flex items-center justify-between pl-[5px] pr-[10px] bg-gradient-to-b from-[#bdbdbd] to-[#929292] font-bold text-[#1f1f1f] text-[12px] font-['Liberation_Sans']">
            <span>{s.t}</span>
            <Caret className="border-t-black rotate-180" />
          </div>
          <div className="ml-[17px] border-l border-[#8f8f8f]">
            {s.rows.map(([k, v]) => (
              <div key={k} className="h-[19px] flex border-b border-r border-[#8f8f8f]">
                <div className="w-[133px] pl-[4px] pt-[2px] flex items-center border-r border-[#8f8f8f] bg-[#f0f0f0]">{k}</div>
                <div className="flex-1 pl-[3px] pt-[2px] flex items-center bg-white">{v}</div>
              </div>
            ))}
          </div>
        </div>
      ))}
    </div>
  </div>
);

/* ---------- model space ---------- */
const Grip = ({ x, y, dir }) => {
  const p = {
    l: `${x},${y} ${x + 15},${y - 5} ${x + 15},${y + 5}`,
    r: `${x},${y - 5} ${x + 15},${y} ${x},${y + 5}`,
    d: `${x - 5},${y} ${x + 5},${y} ${x},${y + 15}`,
  }[dir];
  return <polygon points={p} fill="#16b4ea" stroke="#0d4a6a" strokeWidth="1" />;
};
const Drawing = () => (
  <svg className="absolute inset-0" width="1257" height="596" viewBox="342 177 1257 596" fill="none">
    <g stroke="#10108c" strokeWidth="1.2" strokeDasharray="4 3">
      <path d="M743 293.5H830M736.5 376.5H835M786.5 293.5V611M714 611.5H860" />
    </g>
    <path d="M820.5 298L845.5 662" stroke="#c4161c" strokeWidth="1.1" strokeDasharray="4 3" />
    <Grip x={743} y={293.5} dir="l" /><Grip x={815} y={293.5} dir="r" />
    <Grip x={737} y={376.5} dir="l" /><Grip x={820} y={376.5} dir="r" />
    <Grip x={786.5} y={371} dir="d" /><Grip x={786.5} y={606} dir="d" />
    <rect x="608.5" y="598.5" width="10" height="10" fill="#0a76ea" stroke="#0b3c6a" />
    <g stroke="#111" strokeWidth="1">
      <path d="M1262 413V449M1262 455V492M1222 452H1259M1265 452H1302" />
      <rect x="1259" y="449" width="6" height="6" />
      <path d="M1259 452H1265M1262 449V455" />
      <path d="M358.5 707V757.5H408" />
      <rect x="355" y="751.5" width="9" height="9" />
    </g>
    <text x="360" y="702" fontSize="19" fontWeight="200" fill="#111" fontFamily="Inter, sans-serif">Y</text>
    <text x="414" y="757" fontSize="19" fontWeight="200" fill="#111" fontFamily="Inter, sans-serif">X</text>

    <circle cx="1528" cy="270" r="46" stroke="#f8f8f8" strokeWidth="10" />
    <rect x="1506.5" y="248.5" width="43" height="43" rx="1" fill="#efefef" stroke="#9a9a9a" />
    <rect x="1515" y="257" width="26" height="26" fill="#e1e3e6" />
    <g fontFamily="'Liberation Sans', sans-serif" fontWeight="700" fill="#f6f6f6" stroke="#c2c2c2" strokeWidth=".8" fontSize="17" textAnchor="middle">
      <text x="1528" y="231">N</text><text x="1528" y="324">S</text><text x="1481" y="277">W</text><text x="1575" y="277">E</text>
    </g>
    <text x="1528" y="274" fontSize="10.5" fontWeight="700" textAnchor="middle" fill="#9a9a9a" fontFamily="'Liberation Sans', sans-serif">TOP</text>
  </svg>
);
const NavBar = () => (
  <div className="absolute left-[1217px] top-[208px] w-[36px] h-[214px] rounded-[5px] border-2 border-[#d2d2d2] bg-[#f1f1f1] flex flex-col items-center py-[12px]">
    <svg width="32" height="190" viewBox="0 0 32 190" fill="none" stroke="#dcdcdc" strokeWidth="1.3">
      <circle cx="16" cy="18" r="11" /><circle cx="16" cy="18" r="7" />
      <path d="M0 50H32" stroke="#d8d8d8" />
      <path d="M10 76C4 70 6 66 9 68L9 58C10 55 12 56 12 59V54C13 52 15 52 15 55V54C16 52 18 52 18 55V56C19 54 21 55 21 58V70C21 75 17 78 13 78C11 78 11 77 10 76Z" />
      <path d="M6 86L24 104M24 86L6 104" /><circle cx="22" cy="103" r="4" />
      <path d="M16 128V148M3 138C3 132 29 132 29 138C29 144 3 144 3 138Z" />
      <path d="M0 158H32" stroke="#d8d8d8" />
      <rect x="4" y="163" width="7" height="7" /><rect x="12" y="163" width="7" height="7" /><rect x="20" y="163" width="7" height="7" />
      <rect x="4" y="172" width="18" height="14" /><path d="M11 175L16 179L11 183Z" fill="#e2e2e2" />
    </svg>
  </div>
);
const Canvas = () => (
  <div className="relative h-[596px] bg-white text-[12px] overflow-hidden border-r-[3px] border-[#cfcfcf]">
    <div className="pl-[4px] pt-[6px] font-bold text-[#3c3c3c] font-['Liberation_Sans']">[−][Top][2D Wireframe]</div>
    <Drawing />
    <div className="absolute left-[1195px] top-[12px] flex items-center gap-[8px]">
      <span className="w-[11px] h-[5px] bg-[#999] border border-[#777]" />
      <I w={11} h={11}><rect x={2.5} y={.5} width={8} height={8} stroke="#777" /><rect x={.5} y={2.5} width={8} height={8} fill="#fff" stroke="#777" /></I>
      <I w={11} h={10}><path d="M1 1L10 9M10 1L1 9" stroke="#888" strokeWidth="2" /></I>
    </div>
    <div className="absolute left-[1161px] top-[169px] w-[47px] h-[16px] rounded-[4px] bg-[#eceef5] flex items-center justify-center gap-[6px] text-[10.5px] text-[#a5a5a5] font-['Liberation_Sans']">WCS
      <span className="w-0 h-0 border-x-[4px] border-t-[5px] border-x-transparent border-t-[#c7c9d3]" />
    </div>
    <NavBar />
  </div>
);
const Slash = () => <svg width="9" height="17" viewBox="0 0 9 17" fill="none" className="shrink-0"><path d="M0.5 16.5H2L8 0.5" stroke="#777" /></svg>;
const Nav = ({ d }) => <span className="w-[15px] h-[17px] flex items-center justify-center border-r border-[#9c9c9c]"><svg width="8" height="9" viewBox="0 0 8 9" fill="#666">{d}</svg></span>;
const LayoutTabs = () => (
  <div className="h-[17px] flex items-center bg-[#f0f0f0] border-t border-[#777] text-[12px] text-[#222] whitespace-nowrap">
    <div className="flex border-r border-[#9c9c9c] ml-[1px]">
      <Nav d={<><rect x="0" y="0" width="1.5" height="9" /><path d="M8 0V9L2 4.5Z" /></>} />
      <Nav d={<path d="M7 0V9L1 4.5Z" />} />
      <Nav d={<path d="M1 0V9L7 4.5Z" />} />
      <Nav d={<><rect x="6.5" y="0" width="1.5" height="9" /><path d="M0 0V9L6 4.5Z" /></>} />
    </div>
    <svg width="9" height="17" viewBox="0 0 9 17" fill="none" className="shrink-0"><path d="M1 0L7 16.5" stroke="#777" /></svg>
    <span className="w-[36px] text-center">Model</span>
    <Slash /><span className="ml-[2px] mr-[4px] w-[22px] tracking-[-0.7px]">A4-х</span>
    <Slash /><span className="ml-[3px] mr-[4px] w-[22px] tracking-[-0.7px]">A4-в</span>
    <Slash /><span className="ml-[3px] mr-[4px] w-[14px]">A3</span>
    <Slash /><span className="ml-[3px] mr-[4px] w-[15px]">A2</span>
    <Slash /><span className="ml-[3px] mr-[4px] w-[13px]">A1</span>
    <Slash />
  </div>
);
const Command = () => (
  <div className="h-[52px] flex">
    <div className="w-[22px] bg-[#4c4c4c] flex flex-col items-center pt-[7px]">
      <span className="w-[15px] h-[5px] border-y border-dotted border-[#aaa]" />
      <I w={11} h={11} className="mt-[9px]"><path d="M1.5 1.5L9.5 9.5M9.5 1.5L1.5 9.5" stroke="#fff" strokeWidth="2" /></I>
      <I w={14} h={14} className="mt-[7px]"><path d="M2 13L8 6C7 3 9 1 12 2L9.5 4.5L11 6L13 4C14 7 11 9 9 8L3 14Z" fill="#fff" /></I>
    </div>
    <div className="flex-1 flex flex-col font-['Liberation_Mono'] text-[12px]">
      <div className="h-[29px] bg-[#c4c4c4] border-b border-[#777] flex items-center pl-[3px] pt-[12px] text-[#222] font-semibold">Command:</div>
      <div className="flex-1 bg-white flex items-center pl-[5px] text-[#9a9a9a] italic">
        <span className="w-[15px] h-[16px] bg-[#dcdcdc] border border-[#999] flex items-center justify-center"><I w={10} h={9}><path d="M1 1L4.5 4L1 7M5 8H9" stroke="#333" /></I></span>
        <span className="ml-[3px] mr-[8px] flex"><Caret className="border-t-[#999]" /></span>
        <span>Type a command</span>
      </div>
    </div>
  </div>
);

/* ---------- status bar ---------- */
const flat = [["INFER", "w-[38px]"], ["SNAP", "w-[35px]"], ["GRID", "w-[33px]"], ["ORTHO", "w-[45px]"], ["POLAR", "w-[42px]"]];
const on = [["OSNAP", "w-[43px]"], ["3DOSNAP", "w-[57px]"], ["OTRACK", "w-[50px]"], ["DUCS", "w-[37px]"], ["DYN", "w-[28px]"], ["LWT", "w-[30px]"], ["TPY", "w-[27px]"]];
const off = [["QP", "w-[22px]"], ["SC", "w-[19px]"], ["AM", "w-[22px]"]];
const Cell = ({ children, className = "" }) => <div className={"h-full flex items-center justify-center border-r border-[#8d8d8d] " + className}>{children}</div>;
const AnnoI = ({ dim, dot }) => (
  <I w={20} h={20}><path d="M10 2L13 10L18 17L10 13L2 17L7 10Z" fill={dim ? "#bdbdbd" : "#f1f1f1"} stroke={dim ? "#8a8a8a" : "#444"} />{dot && <circle cx={15} cy={13} r={3.4} fill="#f0b429" stroke="#fff" />}</I>
);
const Status = () => (
  <div className="relative h-[22px] flex bg-gradient-to-b from-[#7b7b7b] to-[#a3a3a3] font-['Liberation_Sans'] text-[11.5px] tracking-[-0.3px] text-[#1d1d1d] border-t border-[#333] overflow-hidden">
    <div className="w-[148px] pl-[12px] flex items-center text-[12px] tracking-[-0.55px]">1885.39, 2235.23, 0.00</div>
    <span className="absolute left-[16px] top-[17px] w-[22px] h-[12px] rounded-full bg-[#c7dcea] border border-[#5a86a8]" />
    {flat.map(([t, w]) => <Cell key={t} className={w + " bg-[#b4b4b4]"}>{t}</Cell>)}
    {on.map(([t, w]) => <Cell key={t} className={w + " bg-gradient-to-b from-[#cfe9f2] to-[#a6d7e6]"}>{t}</Cell>)}
    {off.map(([t, w]) => <Cell key={t} className={w + " bg-[#b4b4b4]"}>{t}</Cell>)}
    <div className="flex-1" />
    <Cell className="w-[43px] bg-[#b8b8b8] text-[12px]">MODEL</Cell>
    <Cell className="w-[22px] bg-[#b8b8b8]"><I w={17} h={17}><rect x={3} y={1} width={11} height={11} fill="#eee" stroke="#333" /><path d="M6 3V10H13Z" fill="#888" /><path d="M0 15H17" stroke="#444" /></I></Cell>
    <Cell className="w-[23px] bg-[#b8b8b8]"><I w={18} h={17}><rect x={2} y={1} width={6.5} height={9} fill="#eee" stroke="#333" /><rect x={9.5} y={1} width={6.5} height={9} fill="#eee" stroke="#333" /><path d="M1 14H17" stroke="#444" strokeWidth="1.5" /></I></Cell>
    <div className="w-[12px] bg-[#8b8b8b] border-r border-[#7a7a7a]" />
    <Cell className="w-[50px] bg-[#b8b8b8] gap-[3px]"><AnnoI /><span className="text-[13px]">1:1</span><Caret className="border-t-black" /></Cell>
    <Cell className="w-[22px] bg-[#b8b8b8]"><AnnoI dot /></Cell>
    <Cell className="w-[21px] bg-[#b8b8b8]"><AnnoI dim /></Cell>
    <div className="w-[7px] bg-[#8b8b8b] border-r border-[#7a7a7a]" />
    <Cell className="w-[22px] bg-[#b8b8b8]"><GearI s={17} c="#333" /></Cell>
    <Cell className="w-[21px] bg-[#b8b8b8]"><LockI /></Cell>
    <Cell className="w-[22px] bg-[#b8b8b8]"><I w={14} h={14}><circle cx={7} cy={7} r={6.5} fill="#e1752c" /><path d="M4 3L8 7" stroke="#f8dcc6" /></I></Cell>
    <div className="w-[52px] px-[2px] py-[1px] flex bg-[#8f8f8f]">
      <span className="w-[24px] flex items-center justify-center"><I w={18} h={18}><path d="M1 2H12L16 6V15H1Z" fill="#e8c14e" stroke="#234" /><rect x={1} y={2} width={9} height={5} fill="#2a5f9a" /><path d="M8 13L11 16L17 9" stroke="#3aa63a" strokeWidth="2" /></I></span>
      <span className="flex-1 flex items-center justify-center bg-[#a9a9a9]"><BulbI /></span>
    </div>
    <div className="w-[12px] flex items-center justify-center bg-[#b0b0b0]"><Caret className="border-t-black" /></div>
    <div className="w-[23px] flex items-center justify-center bg-[#b8b8b8] border-l border-[#8d8d8d]"><I w={15} h={15}><rect x={1} y={1} width={13} height={13} fill="#fff" stroke="#555" /><rect x={1} y={1} width={13} height={3} fill="#999" /></I></div>
  </div>
);

export default function App() {
  return (
    <div className="relative w-[1600px] h-[900px] flex flex-col bg-black overflow-hidden font-['DejaVu_Sans_Condensed','Noto_Sans',sans-serif]">
      <TitleBar />
      <Tabs />
      <Ribbon />
      <DocBar />
      <div className="h-[677px] flex bg-[#6f6f6f] pt-[6px]">
        <div className="flex flex-col">
          <Palette />
        </div>
        <div className="ml-[4px] flex-1 flex flex-col">
          <Canvas />
          <LayoutTabs />
          <div className="h-[6px] bg-[#6a6a6a]" />
          <Command />
        </div>
      </div>
      <Status />
      <div className="h-[30px] bg-black" />
      <AppLogo />
    </div>
  );
}
